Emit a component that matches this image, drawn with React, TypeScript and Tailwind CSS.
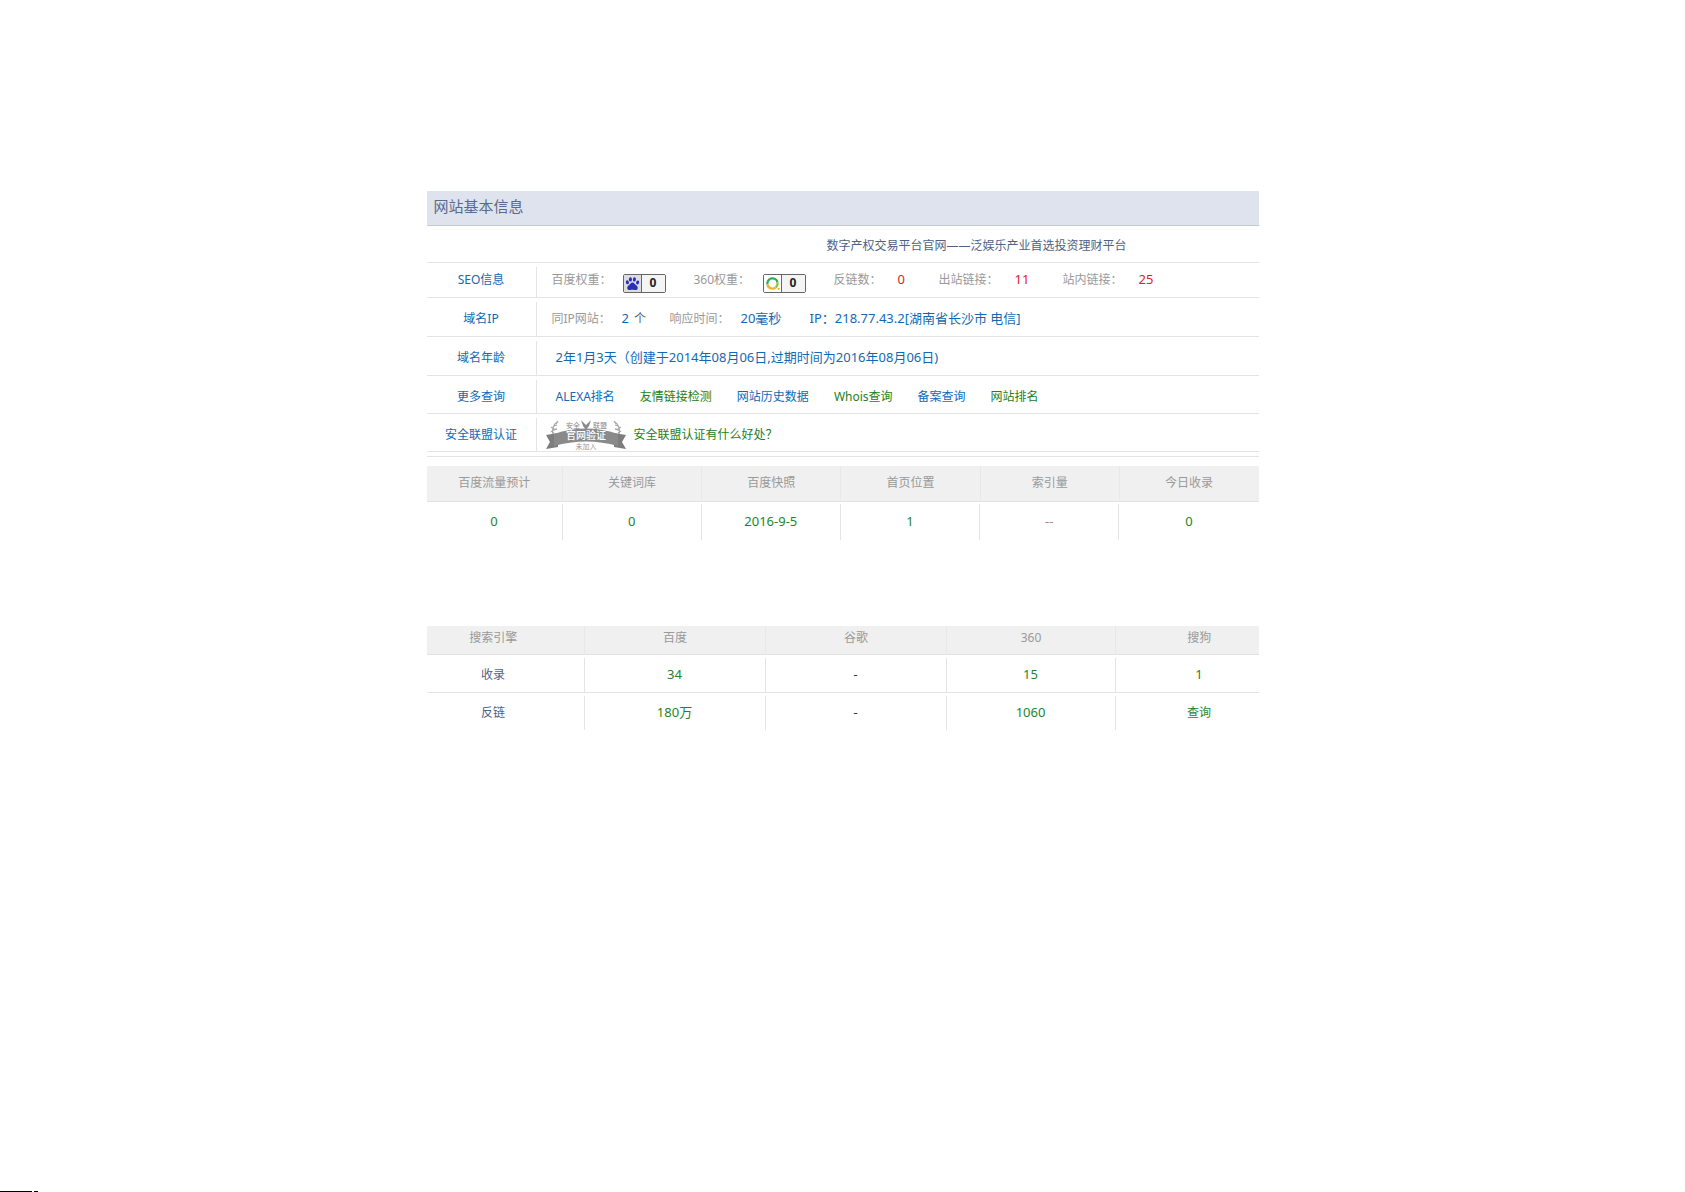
import React from "react";
import clsx from "clsx";

interface InfoRowProps {
  label: string;
  children: React.ReactNode;
  className?: string;
}

const InfoRow: React.FC<InfoRowProps> = ({ label, children, className }) => (
  <div className={clsx("flex border-b border-[#e4e4e4]", className)}>
    <div className="mt-1 flex w-[110px] shrink-0 items-center justify-center border-r border-[#e4e4e4]">
      <a href="#" className="text-[#1169b5]">
        {label}
      </a>
    </div>
    <div className="flex flex-1 items-center pt-1">{children}</div>
  </div>
);

const PawIcon = () => (
  <svg width="18" height="17" viewBox="0 0 18 17" fill="#2b2fb4" aria-hidden="true">
    <ellipse cx="3.6" cy="7.2" rx="1.6" ry="2.1" transform="rotate(-15 3.6 7.2)" />
    <ellipse cx="6.8" cy="4.2" rx="1.6" ry="2.3" />
    <ellipse cx="11" cy="4.2" rx="1.6" ry="2.3" transform="rotate(8 11 4.2)" />
    <ellipse cx="14.4" cy="7.4" rx="1.6" ry="2.1" transform="rotate(15 14.4 7.4)" />
    <path d="M9 7.4c1.7 0 2.4 1.6 3.6 2.7 1.5 1.3 2.3 2.2 1.9 3.7-.4 1.6-1.9 1.9-3.2 1.6-1.4-.3-3.2-.3-4.6 0-1.3.3-2.8 0-3.2-1.6-.4-1.5.4-2.4 1.9-3.7C6.6 9 7.3 7.4 9 7.4z" />
  </svg>
);

const RingIcon = () => (
  <svg width="18" height="17" viewBox="0 0 18 17" fill="none" strokeWidth="2.4" aria-hidden="true">
    <path d="M3.6 9.5a5.4 5.4 0 1 1 10.7-2" stroke="#2fae4e" />
    <path d="M14.3 7.5a5.4 5.4 0 0 1-1.9 5" stroke="#8cc63e" />
    <path d="M3.6 9.5a5.4 5.4 0 0 0 8.8 3" stroke="#f5b324" />
    <circle cx="15.6" cy="14.2" r="1.1" fill="#f5b324" />
  </svg>
);

const WeightBadge: React.FC<{ icon: React.ReactNode; value: number; tint?: boolean }> = ({
  icon,
  value,
  tint,
}) => (
  <span className="mt-1.5 flex h-[19px] w-[43px] overflow-hidden rounded-xs border border-[#666]">
    <span
      className={clsx(
        "flex w-[18px] items-center justify-center border-r border-[#666]",
        tint ? "bg-[#dcdce4]" : "bg-white"
      )}
    >
      {icon}
    </span>
    <span className="flex flex-1 items-center justify-center bg-[#f4f4f4] font-bold text-[#222]">
      {value}
    </span>
  </span>
);

const SafetyRibbon = () => (
  <svg
    width="80"
    height="30"
    viewBox="0 0 80 30"
    role="img"
    aria-label="官网验证"
    className="font-['Noto_Sans_CJK_SC',sans-serif]"
  >
    {/* laurel branches */}
    <g stroke="#a9a9a9" strokeWidth="1.3" fill="none">
      <path d="M7 15C6 10 7 5 11 2M5 7l3 2M5 11l3 2M11 5l-3 1M11 9l-4 1M12 1l-2 3" />
      <path d="M73 15c1-5 0-10-4-13M75 7l-3 2M75 11l-3 2M69 5l3 1M69 9l4 1M68 1l2 3" />
    </g>
    <path d="M0 15l12-2v14l-12 2 4-7z" fill="#7d7d7d" />
    <path d="M80 15l-12-2v14l12 2-4-7z" fill="#7d7d7d" />
    <path d="M8 14Q40 3 72 14v12Q40 17 8 26z" fill="#8a8a8a" />
    <path d="M35 0l5 5 5-5-2 6-3 4-3-4z" fill="#8a8a8a" />
    <text x="20" y="8" fontSize="7" fill="#888">安全</text>
    <text x="47" y="8" fontSize="7" fill="#888">联盟</text>
    <text x="40" y="19" fontSize="10" fontWeight="500" fill="#fff" textAnchor="middle">
      官网验证
    </text>
    <text x="40" y="29" fontSize="7" fill="#999" textAnchor="middle">未加入</text>
  </svg>
);

const stats = [
  { name: "百度流量预计", value: "0" },
  { name: "关键词库", value: "0" },
  { name: "百度快照", value: "2016-9-5" },
  { name: "首页位置", value: "1" },
  { name: "索引量", value: "--" },
  { name: "今日收录", value: "0" },
];

const engines = ["搜索引擎", "百度", "谷歌", "360", "搜狗"];

const engineRows = [
  ["收录", "34", "-", "15", "1"],
  ["反链", "180万", "-", "1060", "查询"],
];

const App: React.FC = () => {
  return (
    <div className="flex min-h-screen flex-col bg-white font-['Noto_Sans','Noto_Sans_CJK_SC',sans-serif] text-xs text-[#999]">
      <main className="mx-auto w-full max-w-[832px] pt-[191px]">
        <h1 className="border-b border-[#c3c7d3] bg-[#dfe3ee] px-[7px] pt-1 pb-2 text-[15px] leading-[22px] text-[#5b6a8c]">
          网站基本信息
        </h1>

        {/* Basic info */}
        <div className="flex h-[37px] items-center border-b border-[#e4e4e4] pt-1 pl-[400px] text-[#4f5f85]">
          数字产权交易平台官网——泛娱乐产业首选投资理财平台
        </div>
        <InfoRow label="SEO信息" className="h-[35px] *:pb-1">
          <div className="grid grid-cols-[71px_71px_69px_71px_64px_41px_76px_48px_76px_1fr] items-center pl-[15px]">
            <span>百度权重：</span>
            <WeightBadge icon={<PawIcon />} value={0} tint />
            <span>360权重：</span>
            <WeightBadge icon={<RingIcon />} value={0} />
            <span>反链数：</span>
            <span className="text-[13px] text-[#e0202c]">0</span>
            <span>出站链接：</span>
            <span className="text-[13px] text-[#e0202c]">11</span>
            <span>站内链接：</span>
            <span className="text-[13px] text-[#e0202c]">25</span>
          </div>
        </InfoRow>
        <InfoRow label="域名IP" className="h-[39px]">
          <div className="grid grid-cols-[70px_48px_71px_69px_1fr] items-center pl-[15px]">
            <span>同IP网站：</span>
            <span className="text-[#4f5f85]">
              <a href="#" className="pr-0.5 text-[13px] text-[#1169b5]">2</a> 个
            </span>
            <span>响应时间：</span>
            <span className="text-[13px] text-[#1169b5]">20毫秒</span>
            <a href="#" className="text-[13px] text-[#1169b5]">IP：218.77.43.2[湖南省长沙市 电信]</a>
          </div>
        </InfoRow>
        <InfoRow label="域名年龄" className="h-[39px]">
          <span className="pl-[19px] text-[13px] text-[#1169b5]">
            2年1月3天（创建于2014年08月06日,过期时间为2016年08月06日)
          </span>
        </InfoRow>
        <InfoRow label="更多查询" className="h-[38px]">
          <nav className="flex gap-[25px] pl-[19px] text-[#1169b5]">
            <a href="#">ALEXA排名</a>
            <a href="#" className="text-[#228022]">友情链接检测</a>
            <a href="#">网站历史数据</a>
            <a href="#" className="text-[#228022]">Whois查询</a>
            <a href="#">备案查询</a>
            <a href="#" className="text-[#228022]">网站排名</a>
          </nav>
        </InfoRow>
        <InfoRow label="安全联盟认证" className="h-[38px]">
          <a href="#" className="flex items-center gap-2 pl-[9px] text-[#228022]">
            <SafetyRibbon />
            安全联盟认证有什么好处？
          </a>
        </InfoRow>

        {/* Traffic stats */}
        <div className="border-b border-[#e4e4e4] pt-1" />
        <table className="mt-[9px] w-full table-fixed border-collapse text-center">
          <thead className="bg-[#f0f0f0]">
            <tr className="h-[35px] border-b border-[#e2e2e2]">
              {stats.map((item) => (
                <th
                  key={item.name}
                  className="border-r border-[#e8e8e8] p-0 font-normal first:w-[136px] last:border-r-0"
                >
                  {item.name}
                </th>
              ))}
            </tr>
          </thead>
          <tbody>
            <tr className="text-[13px] text-[#1b862c]">
              {stats.map((item) => (
                <td key={item.name} className="group p-0 pt-0.5">
                  <div
                    className={clsx(
                      "flex h-9 items-center justify-center border-r border-[#e4e4e4] group-last:border-r-0",
                      item.value === "--" && "text-[#c08080]"
                    )}
                  >
                    {item.value}
                  </div>
                </td>
              ))}
            </tr>
          </tbody>
        </table>

        {/* Search engines */}
        <table className="mt-[86px] w-full table-fixed border-collapse text-center">
          <colgroup>
            <col className="w-[158px]" />
            <col className="w-[181px]" />
            <col className="w-[181px]" />
            <col className="w-[169px]" />
            <col />
          </colgroup>
          <thead className="bg-[#f0f0f0]">
            <tr className="h-[29px] border-b border-[#e2e2e2]">
              {engines.map((name) => (
                <th
                  key={name}
                  className="border-r border-[#e8e8e8] p-0 pb-1 font-normal first:pr-6 last:border-r-0 last:pl-6"
                >
                  {name}
                </th>
              ))}
            </tr>
          </thead>
          <tbody>
            {engineRows.map((row) => (
              <tr key={row[0]} className="border-b border-[#e4e4e4] last:border-b-0">
                {row.map((cell, i) => (
                  <td key={i} className="group p-0 pt-[3px]">
                    <div
                      className={clsx(
                        "flex h-[34px] items-center justify-center border-r border-[#e4e4e4] group-first:pr-6 group-last:border-r-0 group-last:pl-6",
                        i === 0 && "text-[#4f5f85]",
                        i > 0 && cell === "-" && "text-[#333]",
                        i > 0 && cell !== "-" && "text-[#1b862c]",
                        i > 0 && cell !== "查询" && "text-[13px]"
                      )}
                    >
                      {cell === "查询" ? <a href="#">{cell}</a> : cell}
                    </div>
                  </td>
                ))}
              </tr>
            ))}
          </tbody>
        </table>
      </main>

      <footer className="mt-auto flex gap-0.5">
        <div className="h-px w-8 bg-black" />
        <div className="h-px w-1 bg-black" />
      </footer>
    </div>
  );
};

export default App;
